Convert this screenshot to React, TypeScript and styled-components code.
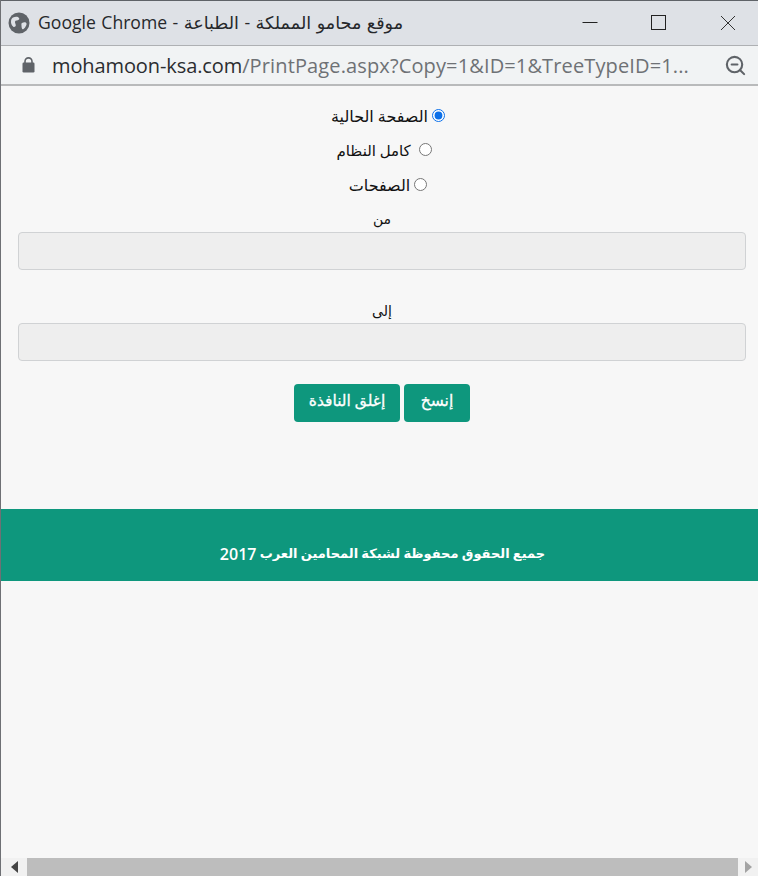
import styled, { createGlobalStyle } from 'styled-components';
import { ZoomOut } from 'lucide-react';

const Global = createGlobalStyle`
  html, body { margin: 0; padding: 0; height: 100%; overflow: hidden; }
  * { box-sizing: border-box; }
`;

const Win = styled.div`
  width: 758px;
  height: 876px;
  display: flex;
  flex-direction: column;
  background: #f7f7f7;
  border-left: 1px solid #6e7074;
  font-family: "Liberation Serif", "DejaVu Sans", serif;
  color: #111;
  overflow: hidden;
`;

const TitleBar = styled.div`
  height: 46px;
  flex: none;
  display: flex;
  align-items: center;
  background: #dee1e6;
  border-top: 1px solid #5f6368;
  border-bottom: 1px solid #aeb0b3;
  padding-left: 7px;
`;

const TitleText = styled.span`
  margin: -2px 0 0 8px;
  font: 400 17.6px "Open Sans", "DejaVu Sans", sans-serif;
  word-spacing: 0.9px;
  color: #26282b;
  white-space: nowrap;
  direction: rtl;
`;

const TitleGap = styled.div`
  flex: 1;
`;

const WinButton = styled.div`
  width: 60px;
  height: 100%;
  margin-left: 9px;
  display: flex;
  align-items: center;
  justify-content: center;
`;

const AddressBar = styled.div`
  height: 40px;
  flex: none;
  display: flex;
  align-items: center;
  background: #f1f3f4;
  border-bottom: 2px solid #b9babb;
  padding: 0 11px 0 21px;
`;

const Url = styled.span`
  margin-left: 17px;
  flex: 1;
  font: 400 20px "Open Sans", sans-serif;
  color: #6e7175;
  white-space: nowrap;
  letter-spacing: 0.13px;

  b {
    font-weight: 400;
    color: #2b2d30;
    letter-spacing: -0.1px;
  }
`;

const Content = styled.main`
  flex: 1;
  min-height: 0;
  display: flex;
  flex-direction: column;
`;

const Form = styled.form`
  padding: 19px 12px 0 17px;
  height: 423px;
  flex: none;
  display: flex;
  flex-direction: column;
  align-items: center;
`;

const RadioRow = styled.label<{ $h: number; $shift: number; $size?: number }>`
  direction: rtl;
  height: ${p => p.$h}px;
  display: flex;
  align-items: flex-start;
  gap: 4px;
  font-size: ${p => p.$size ?? 16}px;
  line-height: 22px;
  transform: translateX(${p => p.$shift}px);

  span {
    margin-top: 1px;
  }

  input {
    width: 13px;
    height: 13px;
    margin: 4px 0 0;
    accent-color: #0b6fe8;
  }
`;

const FieldLabel = styled.label<{ $top: number; $h: number }>`
  font-size: 14px;
  line-height: 20px;
  height: ${p => p.$h}px;
  margin-top: ${p => p.$top}px;
  direction: rtl;
  text-align: center;
`;

const Field = styled.input`
  width: 100%;
  height: 38px;
  flex: none;
  margin-top: 2px;
  background: #eeeeee;
  border: 1px solid #d0d2d4;
  border-radius: 4px;
`;

const Buttons = styled.div`
  direction: rtl;
  margin-top: 23px;
  display: flex;
  gap: 4px;
`;

const Btn = styled.button<{ $w: number }>`
  width: ${p => p.$w}px;
  height: 38px;
  border: none;
  border-radius: 4px;
  background: #0e977d;
  color: #fff;
  font: 400 15.5px "Liberation Serif", "DejaVu Sans", serif;
  -webkit-text-stroke: 0.3px #fff;
  padding: 0 0 5px;
`;

const Footer = styled.footer`
  height: 72px;
  flex: none;
  background: #0e977d;
  color: #fff;
  direction: rtl;
  display: flex;
  align-items: flex-end;
  justify-content: center;
  padding: 0 0 19px 6px;
  font: 700 13px "Liberation Serif", "DejaVu Sans", serif;
  white-space: pre;
`;

const Year = styled.span`
  font: 600 16px/16px "Open Sans", sans-serif;
`;

const Spacer = styled.div`
  flex: 1;
`;

const Scroll = styled.div`
  height: 18px;
  flex: none;
  display: flex;
  background: #f1f1f1;
`;

const ScrollArrow = styled.div<{ $w: number }>`
  width: ${p => p.$w}px;
  display: flex;
  align-items: center;
  justify-content: center;
`;

const Thumb = styled.div`
  flex: 1;
  background: #bdbdbd;
`;

const Globe = () => (
  <svg width="22" height="22" viewBox="0 0 22 22">
    <circle cx="11" cy="11" r="10.5" fill="#5f6368" />
    <path d="M5 5.500c2.500-1 5-1 6 .5s-1 2.500-2.500 2.500S6.500 10 7.500 12s-.5 3-1.500 3-3-2.500-3-5 .5-3.500 2-4.500zM14 11c2-1 4-.8 4.500.5s-1.500 4.500-3 5.500-2-1.500-2-3-.5-2.300.5-3z" fill="#dee1e6" />
  </svg>
);

const Lock = () => (
  <svg width="13" height="16" viewBox="0 0 13 16">
    <path d="M3 6V4.400a3.500 3.500 0 0 1 7 0V6" fill="none" stroke="#5f6368" strokeWidth="1.600" />
    <rect x="0.500" y="5.500" width="12" height="10" rx="1.200" fill="#5f6368" />
  </svg>
);

export default function App() {
  return (
    <>
      <Global />
      <Win>
        <TitleBar>
          <Globe />
          <TitleText>موقع محامو المملكة - الطباعة - Google Chrome</TitleText>
          <TitleGap />
          <WinButton>
            <svg width="16" height="16" viewBox="0 0 16 16"><path d="M0.500 7.500h15" stroke="#222" /></svg>
          </WinButton>
          <WinButton>
            <svg width="16" height="16" viewBox="0 0 16 16"><rect x="0.500" y="0.500" width="14" height="14" fill="none" stroke="#222" /></svg>
          </WinButton>
          <WinButton>
            <svg width="16" height="16" viewBox="0 0 16 16"><path d="M1 1l14 14M15 1L1 15" stroke="#333" /></svg>
          </WinButton>
        </TitleBar>
        <AddressBar>
          <Lock />
          <Url><b>mohamoon-ksa.com</b>/PrintPage.aspx?Copy=1&amp;ID=1&amp;TreeTypeID=1...</Url>
          <ZoomOut size={23} color="#5f6368" strokeWidth={2.2} />
        </AddressBar>
        <Content>
          <Form>
            <RadioRow $h={34} $shift={6}>
              <input type="radio" name="scope" defaultChecked />
              <span>الصفحة الحالية</span>
            </RadioRow>
            <RadioRow $h={35} $shift={2} $size={15}>
              <input type="radio" name="scope" />
              <span>&nbsp;كامل النظام</span>
            </RadioRow>
            <RadioRow $h={22} $shift={6}>
              <input type="radio" name="scope" />
              <span>الصفحات</span>
            </RadioRow>
            <FieldLabel $top={14} $h={20}>من</FieldLabel>
            <Field disabled />
            <FieldLabel $top={32} $h={19}>إلى</FieldLabel>
            <Field disabled />
            <Buttons>
              <Btn type="button" $w={66}>إنسخ</Btn>
              <Btn type="button" $w={106}>إغلق النافذة</Btn>
            </Buttons>
          </Form>
          <Footer>جميع الحقوق محفوظة لشبكة المحامين العرب <Year>2017</Year></Footer>
          <Spacer />
          <Scroll>
            <ScrollArrow $w={26}>
              <svg width="7" height="12" viewBox="0 0 7 12"><path d="M7 0v12L0 6z" fill="#444" /></svg>
            </ScrollArrow>
            <Thumb />
            <ScrollArrow $w={20}>
              <svg width="7" height="12" viewBox="0 0 7 12"><path d="M0 0v12l7-6z" fill="#a3a3a3" /></svg>
            </ScrollArrow>
          </Scroll>
        </Content>
      </Win>
    </>
  );
}
